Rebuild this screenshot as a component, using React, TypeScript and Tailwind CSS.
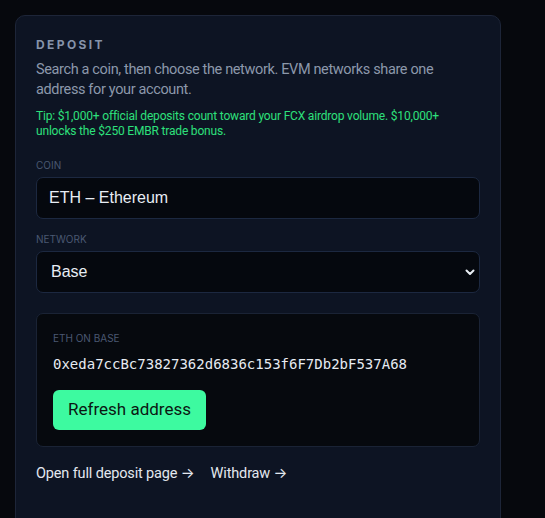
export default function App() {
  return (
    <div className="min-h-screen bg-[#06080d] px-[15px] pt-[15px] font-['Roboto',sans-serif]">
      <section className="w-[486px] h-[520px] rounded-t-[10px] border border-[#1d2538] bg-[#0d1423] px-5 pt-[21px]">
        <h2 className="font-['Inter',sans-serif] text-[12px] font-bold tracking-[0.2em] text-[#8593aa] leading-4">DEPOSIT</h2>
        <p className="mt-[7px] text-[14.5px] leading-5 text-[#8c98ab] whitespace-nowrap tracking-[-0.025em]">
          Search a coin, then choose the network. EVM networks share one
          <br />
          address for your account.
        </p>
        <p className="mt-[9px] text-[12px] leading-[15px] text-[#2de07c] whitespace-nowrap tracking-[-0.015em]">
          Tip: $1,000+ official deposits count toward your FCX airdrop volume. $10,000+
          <br />
          unlocks the $250 EMBR trade bonus.
        </p>

        <label className="block mt-[20px] font-['Inter',sans-serif] text-[10px] uppercase text-[#4a5872] leading-3">Coin</label>
        <div className="mt-[6px] h-[42px] rounded-[7px] border border-[#1c2840] bg-[#05080e] flex items-center px-3">
          <span className="font-['Liberation_Sans',sans-serif] text-[16px] text-[#e8edf4]">ETH – Ethereum</span>
        </div>

        <label className="block mt-[14px] font-['Inter',sans-serif] text-[10px] uppercase text-[#4a5872] leading-3">Network</label>
        <div className="mt-[6px] h-[42px] rounded-[7px] border border-[#1c2840] bg-[#05080e] flex items-center pl-[14px] pr-[4px] justify-between">
          <span className="font-['Liberation_Sans',sans-serif] text-[16px] text-[#e8edf4]">Base</span>
          <svg width="10" height="7" viewBox="0 0 10 7" fill="none">
            <path d="M1.5 1.5 5 5l3.5-3.5" stroke="#e8edf4" strokeWidth="2" strokeLinecap="round" strokeLinejoin="round" />
          </svg>
        </div>

        <div className="mt-[20px] rounded-[7px] border border-[#1a2335] bg-[#06090e] px-4 pt-[18px] pb-[16px]">
          <div className="font-['Inter',sans-serif] text-[10px] uppercase text-[#4a5872] leading-3">ETH on Base</div>
          <div className="mt-[10px] font-['DejaVu_Sans_Mono',monospace] text-[14px] leading-5 text-[#e6ebf2]">
            0xeda7ccBc73827362d6836c153f6F7Db2bF537A68
          </div>
          <button className="mt-[16px] h-[40px] w-[153px] rounded-[6px] bg-[#3dfaa0] text-[17px] text-[#0b1712]">
            Refresh address
          </button>
        </div>

        <div className="mt-[15px] flex gap-[16px] text-[14.5px] text-[#e3e8ef] tracking-[-0.01em]">
          <a>
            Open full deposit page <span className="font-['Inter',sans-serif]">→</span>
          </a>
          <a>
            Withdraw <span className="font-['Inter',sans-serif]">→</span>
          </a>
        </div>
      </section>
    </div>
  );
}
